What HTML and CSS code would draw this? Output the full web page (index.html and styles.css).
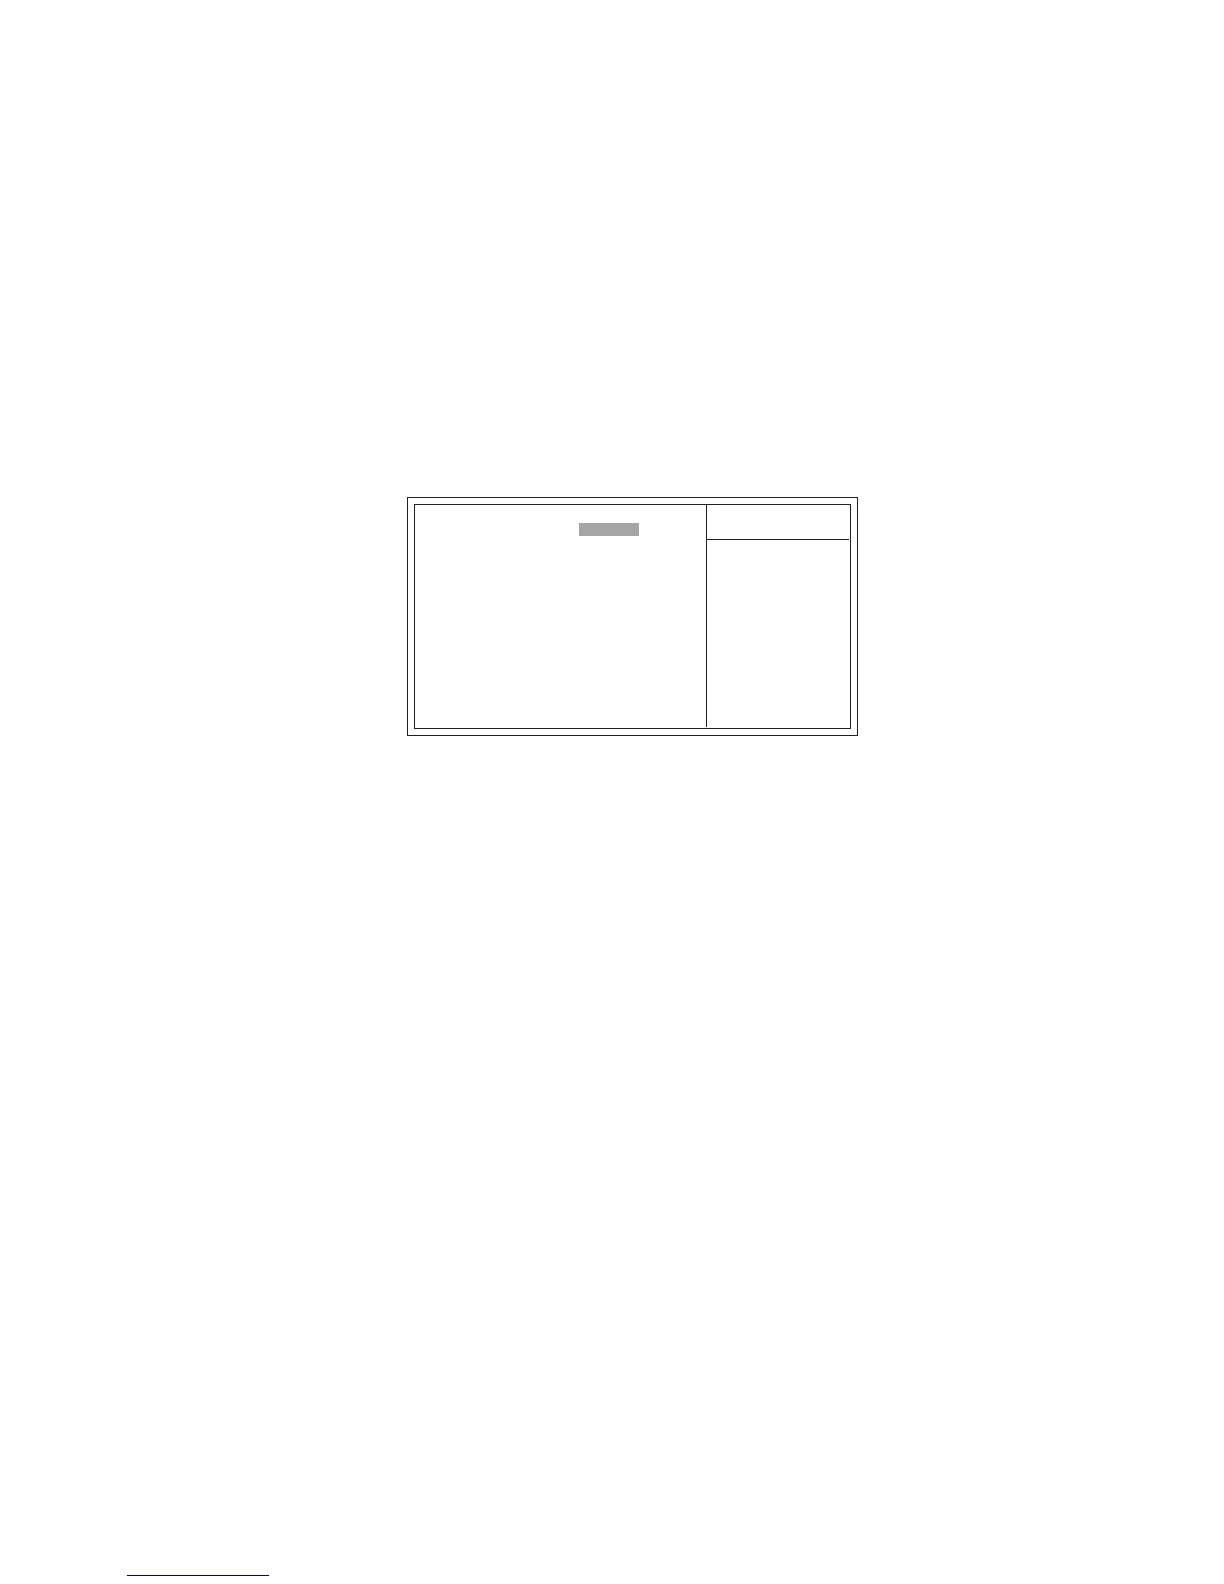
FILE: index.html
```html
<!DOCTYPE html>
<html lang="en">
<head>
  <meta charset="utf-8">
  <meta name="viewport" content="width=device-width, initial-scale=1">
  <title>Setup</title>
  <link rel="stylesheet" href="styles.css">
</head>
<body class="page">
  <main class="content">
    <section class="frame">
      <div class="screen">
        <div class="settings">
          <div class="selection"></div>
        </div>
        <aside class="help">
          <div class="help-header"></div>
        </aside>
      </div>
    </section>
  </main>
  <footer class="footer">
    <hr class="footer-rule">
  </footer>
</body>
</html>
```

FILE: styles.css
```css
*,
*::before,
*::after {
  box-sizing: border-box;
}

.page {
  display: flex;
  flex-direction: column;
  min-height: 100vh;
  margin: 0;
  padding: 497px 127px 8px;
  background: #fff;
  font-family: "Liberation Sans", Arial, sans-serif;
}

.content {
  display: grid;
  grid-template-columns: 280fr 451fr 239fr;
}

/* Double outline around the setup screen */
.frame {
  grid-column: 2;
  padding: 6px;
  border: 1px solid #231f20;
}

.screen {
  display: grid;
  grid-template-columns: 291fr 143fr;
  min-height: 225px;
  padding: 0 1px 1px 0;
  border: 1px solid #231f20;
}

.settings {
  padding: 18px 0 0 164px;
}

.selection {
  width: 60px;
  height: 13px;
  background: #a5a5a5;
}

.help {
  border-left: 1px solid #231f20;
}

.help-header {
  height: 35px;
  border-bottom: 1px solid #231f20;
}

.footer {
  margin-top: auto;
}

.footer-rule {
  width: 142px;
  height: 1px;
  margin: 0;
  border: 0;
  background: #000080;
}
```
